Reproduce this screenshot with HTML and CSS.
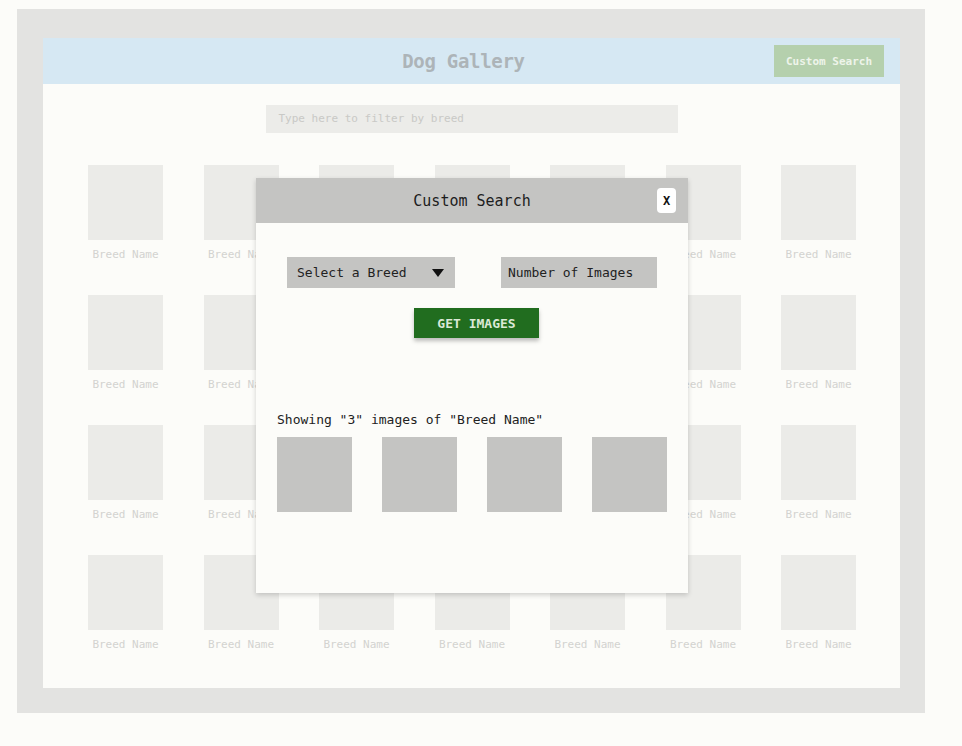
FILE: index.html
```html
<!DOCTYPE html>
<html>
<head>
<meta charset="utf-8">
<link rel="stylesheet" href="styles.css">
</head>
<body>
<div class="frame">
  <div class="panel">
    <header class="topbar">
      <span></span>
      <h1 class="title">Dog Gallery</h1>
      <button class="custom-btn">Custom Search</button>
    </header>
    <div class="filter-row">
      <div class="filter">Type here to filter by breed</div>
    </div>
    <div class="grid">
      <div class="cell"><div class="tile"></div><div class="label">Breed Name</div></div>
      <div class="cell"><div class="tile"></div><div class="label">Breed Name</div></div>
      <div class="cell"><div class="tile"></div><div class="label">Breed Name</div></div>
      <div class="cell"><div class="tile"></div><div class="label">Breed Name</div></div>
      <div class="cell"><div class="tile"></div><div class="label">Breed Name</div></div>
      <div class="cell"><div class="tile"></div><div class="label">Breed Name</div></div>
      <div class="cell"><div class="tile"></div><div class="label">Breed Name</div></div>
      <div class="cell"><div class="tile"></div><div class="label">Breed Name</div></div>
      <div class="cell"><div class="tile"></div><div class="label">Breed Name</div></div>
      <div class="cell"><div class="tile"></div><div class="label">Breed Name</div></div>
      <div class="cell"><div class="tile"></div><div class="label">Breed Name</div></div>
      <div class="cell"><div class="tile"></div><div class="label">Breed Name</div></div>
      <div class="cell"><div class="tile"></div><div class="label">Breed Name</div></div>
      <div class="cell"><div class="tile"></div><div class="label">Breed Name</div></div>
      <div class="cell"><div class="tile"></div><div class="label">Breed Name</div></div>
      <div class="cell"><div class="tile"></div><div class="label">Breed Name</div></div>
      <div class="cell"><div class="tile"></div><div class="label">Breed Name</div></div>
      <div class="cell"><div class="tile"></div><div class="label">Breed Name</div></div>
      <div class="cell"><div class="tile"></div><div class="label">Breed Name</div></div>
      <div class="cell"><div class="tile"></div><div class="label">Breed Name</div></div>
      <div class="cell"><div class="tile"></div><div class="label">Breed Name</div></div>
      <div class="cell"><div class="tile"></div><div class="label">Breed Name</div></div>
      <div class="cell"><div class="tile"></div><div class="label">Breed Name</div></div>
      <div class="cell"><div class="tile"></div><div class="label">Breed Name</div></div>
      <div class="cell"><div class="tile"></div><div class="label">Breed Name</div></div>
      <div class="cell"><div class="tile"></div><div class="label">Breed Name</div></div>
      <div class="cell"><div class="tile"></div><div class="label">Breed Name</div></div>
      <div class="cell"><div class="tile"></div><div class="label">Breed Name</div></div>
    </div>

    <div class="modal">
      <div class="modal-head">
        <span></span>
        <h2 class="modal-title">Custom Search</h2>
        <button class="close">X</button>
      </div>
      <div class="controls">
        <div class="select">
          <span>Select a Breed</span>
          <svg class="caret" width="12" height="8" viewBox="0 0 12 8"><polygon points="0,0 12,0 6,8" fill="#111"/></svg>
        </div>
        <div class="number">Number of Images</div>
      </div>
      <div class="btn-row">
        <button class="get">GET IMAGES</button>
      </div>
      <p class="showing">Showing "3" images of "Breed Name"</p>
      <div class="results">
        <div class="result"></div>
        <div class="result"></div>
        <div class="result"></div>
        <div class="result"></div>
      </div>
    </div>
  </div>
</div>
</body>
</html>
```
FILE: styles.css
```css
* { box-sizing: border-box; }
html, body {
  margin: 0;
  padding: 0;
  background: #fcfcf9;
  font-family: "DejaVu Sans Mono", "Liberation Mono", monospace;
}
.frame {
  margin: 9px 0 0 17px;
  width: 908px;
  height: 704px;
  background: #e3e3e1;
  padding: 29px 25px 25px 26px;
}
.panel {
  position: relative;
  width: 857px;
  height: 650px;
  background: #fcfcf9;
}
.topbar {
  height: 46px;
  background: #d6e8f3;
  display: grid;
  grid-template-columns: 1fr auto 1fr;
  align-items: center;
  padding-right: 16px;
}
.title {
  margin: 0;
  font-size: 19px;
  font-weight: bold;
  color: #adb4b8;
  letter-spacing: -0.3px;
}
.custom-btn {
  justify-self: end;
  width: 110px;
  height: 32px;
  border: none;
  background: #b5d0ad;
  color: #eef4ea;
  font-family: inherit;
  font-size: 11px;
  font-weight: bold;
  padding: 0;
}
.filter-row {
  display: flex;
  justify-content: center;
  padding-top: 21px;
}
.filter {
  width: 412px;
  height: 28px;
  background: #ecece9;
  color: #c9c9c6;
  font-size: 11px;
  line-height: 28px;
  padding-left: 13px;
}
.grid {
  display: grid;
  grid-template-columns: repeat(7, 75px);
  column-gap: 40.5px;
  row-gap: 33px;
  padding: 32px 0 0 45px;
}
.cell {
  display: flex;
  flex-direction: column;
  align-items: center;
}
.tile {
  width: 75px;
  height: 75px;
  background: #ebebe8;
}
.label {
  margin-top: 8px;
  font-size: 11px;
  line-height: 14px;
  color: #d3d3d0;
  white-space: nowrap;
}
.modal {
  position: absolute;
  left: 213px;
  top: 140px;
  width: 432px;
  height: 415px;
  background: #fcfcf9;
  box-shadow: 0 2px 5px rgba(0, 0, 0, 0.18);
}
.modal-head {
  height: 45px;
  background: #c4c4c2;
  display: grid;
  grid-template-columns: 1fr auto 1fr;
  align-items: center;
  padding: 0 12px;
}
.modal-title {
  margin: 0;
  font-size: 15px;
  font-weight: normal;
  color: #1d1d1d;
}
.close {
  justify-self: end;
  width: 19px;
  height: 25px;
  border: none;
  border-radius: 4px;
  background: #ffffff;
  color: #111;
  font-family: inherit;
  font-size: 12px;
  font-weight: bold;
  padding: 0;
}
.controls {
  display: flex;
  justify-content: space-between;
  padding: 34px 31px 0 31px;
}
.select {
  width: 168px;
  height: 31px;
  background: #c4c4c2;
  display: flex;
  align-items: center;
  justify-content: space-between;
  padding: 0 11px 0 10px;
  font-size: 13px;
  color: #222;
}
.caret { display: block; }
.number {
  width: 156px;
  height: 31px;
  background: #c4c4c2;
  font-size: 13px;
  line-height: 31px;
  color: #222;
  padding-left: 7px;
}
.btn-row {
  display: flex;
  justify-content: center;
  padding: 20px 0 0 9px;
}
.get {
  width: 125px;
  height: 30px;
  border: none;
  background: #216d1f;
  color: #dbe9d6;
  font-family: inherit;
  font-size: 13px;
  font-weight: bold;
  box-shadow: 0 3px 4px rgba(0, 0, 0, 0.25);
  padding: 0;
}
.showing {
  margin: 74px 0 0 0;
  padding-left: 21px;
  font-size: 13px;
  line-height: 16px;
  color: #222;
}
.results {
  display: flex;
  justify-content: space-between;
  padding: 9px 21px 0 21px;
}
.result {
  width: 75px;
  height: 75px;
  background: #c4c4c2;
}
```
